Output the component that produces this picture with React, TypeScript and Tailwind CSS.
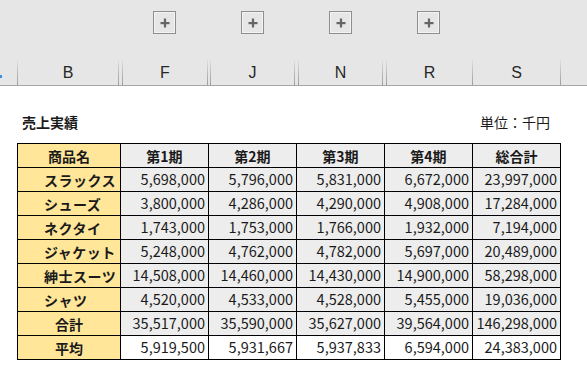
import React from "react";

// column letters shown in the sheet header (hidden columns give the double lines)
const headerCols = [
  { label: "B", w: 100, gap: 3 },
  { label: "F", w: 84, gap: 2 },
  { label: "J", w: 83, gap: 3 },
  { label: "N", w: 83, gap: 3 },
  { label: "R", w: 85, gap: 0 },
  { label: "S", w: 87, gap: 0 },
];

const periods = ["第1期", "第2期", "第3期", "第4期", "総合計"];

const rows: { name: string; values: string[]; kind?: "sum" | "avg" }[] = [
  { name: "スラックス", values: ["5,698,000", "5,796,000", "5,831,000", "6,672,000", "23,997,000"] },
  { name: "シューズ", values: ["3,800,000", "4,286,000", "4,290,000", "4,908,000", "17,284,000"] },
  { name: "ネクタイ", values: ["1,743,000", "1,753,000", "1,766,000", "1,932,000", "7,194,000"] },
  { name: "ジャケット", values: ["5,248,000", "4,762,000", "4,782,000", "5,697,000", "20,489,000"] },
  { name: "紳士スーツ", values: ["14,508,000", "14,460,000", "14,430,000", "14,900,000", "58,298,000"] },
  { name: "シャツ", values: ["4,520,000", "4,533,000", "4,528,000", "5,455,000", "19,036,000"] },
  { name: "合計", values: ["35,517,000", "35,590,000", "35,627,000", "39,564,000", "146,298,000"], kind: "sum" },
  { name: "平均", values: ["5,919,500", "5,931,667", "5,937,833", "6,594,000", "24,383,000"], kind: "avg" },
];

const Line = () => <div className="w-px h-full bg-gradient-to-b from-[#e0e0e0] to-[#9c9c9c]" />;

const Divider = ({ gap }: { gap: number }) => (
  <div className="flex h-full">
    <Line />
    {gap > 0 && (
      <>
        <div style={{ width: gap }} />
        <Line />
      </>
    )}
  </div>
);

const PlusButton = () => (
  <div className="w-[23px] h-[23px] border border-[#8e8e8e] flex items-center justify-center">
    <div className="w-full h-full border border-[#f4f4f4] flex items-center justify-center">
      <svg width="10" height="10" viewBox="0 0 10 10">
        <rect x="0.5" y="4" width="9" height="2.2" fill="#646464" />
        <rect x="3.9" y="0.5" width="2.2" height="9" fill="#646464" />
      </svg>
    </div>
  </div>
);

export default function App() {
  return (
    <div className="w-[587px] h-[375px] bg-white overflow-hidden font-['Noto_Sans_CJK_JP',sans-serif] text-[#1a1a1a]">
      {/* sheet chrome: outline buttons + column letters */}
      <div className="bg-[#e6e6e6] border-b border-[#a6a6a6]">
        <div className="h-[60px] flex gap-[65px] pl-[153px] pt-[11px]">
          <PlusButton />
          <PlusButton />
          <PlusButton />
          <PlusButton />
        </div>
        <div className="h-[25px] flex items-stretch">
          <div className="w-[17px] relative">
            <div className="absolute left-0 top-[15px] w-[2px] h-[3px] bg-[#3b8ee0]" />
          </div>
          <Divider gap={0} />
          {headerCols.map((c) => (
            <React.Fragment key={c.label}>
              <div
                className="flex items-center justify-center font-['Liberation_Sans',sans-serif] text-[16px] text-[#262626]"
                style={{ width: c.w }}
              >
                {c.label}
              </div>
              <Divider gap={c.gap} />
            </React.Fragment>
          ))}
        </div>
      </div>

      {/* title line */}
      <div className="w-[560px] flex justify-between items-center pl-[22px] pr-[10px] mt-[26px] h-[20px] text-[14px]">
        <span className="font-bold">売上実績</span>
        <span>単位：千円</span>
      </div>

      {/* sales table */}
      <table className="ml-[17px] mt-[11px] border-collapse table-fixed text-[14px]">
        <colgroup>
          <col className="w-[103px]" />
          <col className="w-[88px]" />
          <col className="w-[88px]" />
          <col className="w-[88px]" />
          <col className="w-[88px]" />
          <col className="w-[88px]" />
        </colgroup>
        <tbody>
          <tr className="h-[24px]">
            <td className="border border-black bg-[#ffe699] text-center font-bold p-0 leading-none">商品名</td>
            {periods.map((p) => (
              <td key={p} className="border border-black bg-[#ededed] text-center font-bold p-0 leading-none">
                {p}
              </td>
            ))}
          </tr>
          {rows.map((r) => (
            <tr key={r.name} className="h-[24px]">
              <td
                className={
                  r.kind
                    ? "border border-black bg-[#ffe699] text-center font-bold p-0 leading-none"
                    : "border border-black bg-[#ffe699] text-left pl-[26px] font-bold p-0 leading-none tracking-[0.5px]"
                }
              >
                {r.name}
              </td>
              {r.values.map((v, i) => (
                <td
                  key={i}
                  className={
                    r.kind === "avg"
                      ? "border border-black bg-white text-right pr-[3px] py-0 leading-none text-[14.5px]"
                      : "border border-black bg-[#ededed] text-right pr-[3px] py-0 leading-none text-[14.5px]"
                  }
                >
                  {v}
                </td>
              ))}
            </tr>
          ))}
        </tbody>
      </table>
    </div>
  );
}
